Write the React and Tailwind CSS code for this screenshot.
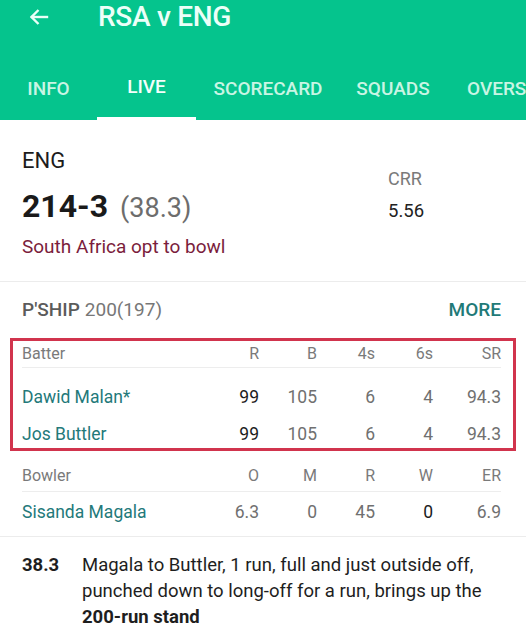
import React from "react";

export default function App() {
  return (
    <div className="w-[526px] h-[635px] overflow-hidden bg-white font-['Roboto',sans-serif]">
      {/* Header */}
      <div className="bg-[#05c48d]">
        <div className="h-[34px] flex items-center">
          <svg className="ml-[27px]" width="24" height="24" viewBox="0 0 24 24" fill="none" stroke="#eafff7" strokeWidth="2.4" strokeLinecap="square">
            <path d="M20 12H5" />
            <path d="M11.5 5L4.5 12l7 7" strokeLinecap="butt" />
          </svg>
          <div className="ml-[47px] text-[28px] font-medium text-[#ecfff8] tracking-[-0.3px]">RSA v ENG</div>
        </div>
        <div className="h-[86px] flex items-end">
          <div className="flex w-full h-[62px] text-[19px] font-medium text-[#c9f5e4]">
            <div className="w-[97px] shrink-0 flex items-center justify-center">INFO</div>
            <div className="w-[99px] shrink-0 flex flex-col">
              <div className="flex-1 flex items-center justify-center text-[#f4fffb]">LIVE</div>
              <div className="h-[3px] bg-white" />
            </div>
            <div className="w-[144px] shrink-0 flex items-center justify-center">SCORECARD</div>
            <div className="w-[106px] shrink-0 flex items-center justify-center">SQUADS</div>
            <div className="shrink-0 flex items-center pl-[21px] whitespace-nowrap">OVERS</div>
          </div>
        </div>
      </div>

      {/* Score */}
      <div className="flex px-[22px] pt-[28px] h-[162px] border-b border-[#ececec]">
        <div className="w-[366px]">
          <div className="text-[22px] leading-[26px] text-[#1c1c1c]">ENG</div>
          <div className="mt-[14px] leading-[36px] flex items-baseline">
            <span className="text-[32px] font-bold text-[#1a1a1a]">214-3</span>
            <span className="ml-[12px] text-[27px] text-[#6d6d6d]">(38.3)</span>
          </div>
          <div className="mt-[9px] text-[19px] leading-[24px] text-[#7b1d3c]">South Africa opt to bowl</div>
        </div>
        <div className="pt-[20px]">
          <div className="text-[18px] leading-[22px] text-[#7a7a7a]">CRR</div>
          <div className="mt-[10px] text-[18.5px] leading-[22px] text-[#222]">5.56</div>
        </div>
      </div>

      {/* Partnership */}
      <div className="flex items-center justify-between pl-[22px] pr-[25px] h-[56px] text-[19px]">
        <div>
          <span className="font-medium text-[#5b5b5b]">P'SHIP</span>
          <span className="ml-[5px] text-[#777]">200(197)</span>
        </div>
        <div className="font-medium text-[#1f7a78]">MORE</div>
      </div>

      {/* Batters box */}
      <div className="mx-[10px] border-[3px] border-[#d1344d] pl-[9px] pr-[12px] text-[17.5px] text-[#707070]">
        <div className="flex items-center h-[27px] border-b border-[#ededed] text-[16px] text-[#7a7a7a]">
          <div className="flex-1">Batter</div>
          <div className="w-[58px] text-right">R</div>
          <div className="w-[58px] text-right">B</div>
          <div className="w-[58px] text-right">4s</div>
          <div className="w-[58px] text-right">6s</div>
          <div className="w-[68px] text-right">SR</div>
        </div>
        {[
          ["Dawid Malan*", "h-[53px] pt-[6px]"],
          ["Jos Buttler", "h-[27px] pb-[1px]"],
        ].map(([n, h]) => (
          <div key={n} className={`flex items-center ${h}`}>
            <div className="flex-1 text-[#23797a]">{n}</div>
            <div className="w-[58px] text-right text-[#1c1c1c]">99</div>
            <div className="w-[58px] text-right">105</div>
            <div className="w-[58px] text-right">6</div>
            <div className="w-[58px] text-right">4</div>
            <div className="w-[68px] text-right">94.3</div>
          </div>
        ))}
      </div>

      {/* Bowler */}
      <div className="pl-[22px] pr-[25px] pt-[11px] text-[17.5px] text-[#707070] border-b border-[#ececec] pb-[4px]">
        <div className="flex items-center h-[30px] border-b border-[#ededed] text-[16px] text-[#7a7a7a] pb-[2px]">
          <div className="flex-1">Bowler</div>
          <div className="w-[58px] text-right">O</div>
          <div className="w-[58px] text-right">M</div>
          <div className="w-[58px] text-right">R</div>
          <div className="w-[58px] text-right">W</div>
          <div className="w-[68px] text-right">ER</div>
        </div>
        <div className="flex items-center h-[40px]">
          <div className="flex-1 text-[#23797a]">Sisanda Magala</div>
          <div className="w-[58px] text-right">6.3</div>
          <div className="w-[58px] text-right">0</div>
          <div className="w-[58px] text-right">45</div>
          <div className="w-[58px] text-right text-[#1c1c1c]">0</div>
          <div className="w-[68px] text-right">6.9</div>
        </div>
      </div>

      {/* Commentary */}
      <div className="flex px-[22px] pt-[15px] text-[18.5px] leading-[26px] text-[#1e1e1e]">
        <div className="w-[60px] shrink-0 font-bold">38.3</div>
        <div>
          Magala to Buttler, 1 run, full and just outside off, punched down to long-off for a run, brings up the{" "}
          <span className="font-bold">200-run stand</span>
        </div>
      </div>
    </div>
  );
}
